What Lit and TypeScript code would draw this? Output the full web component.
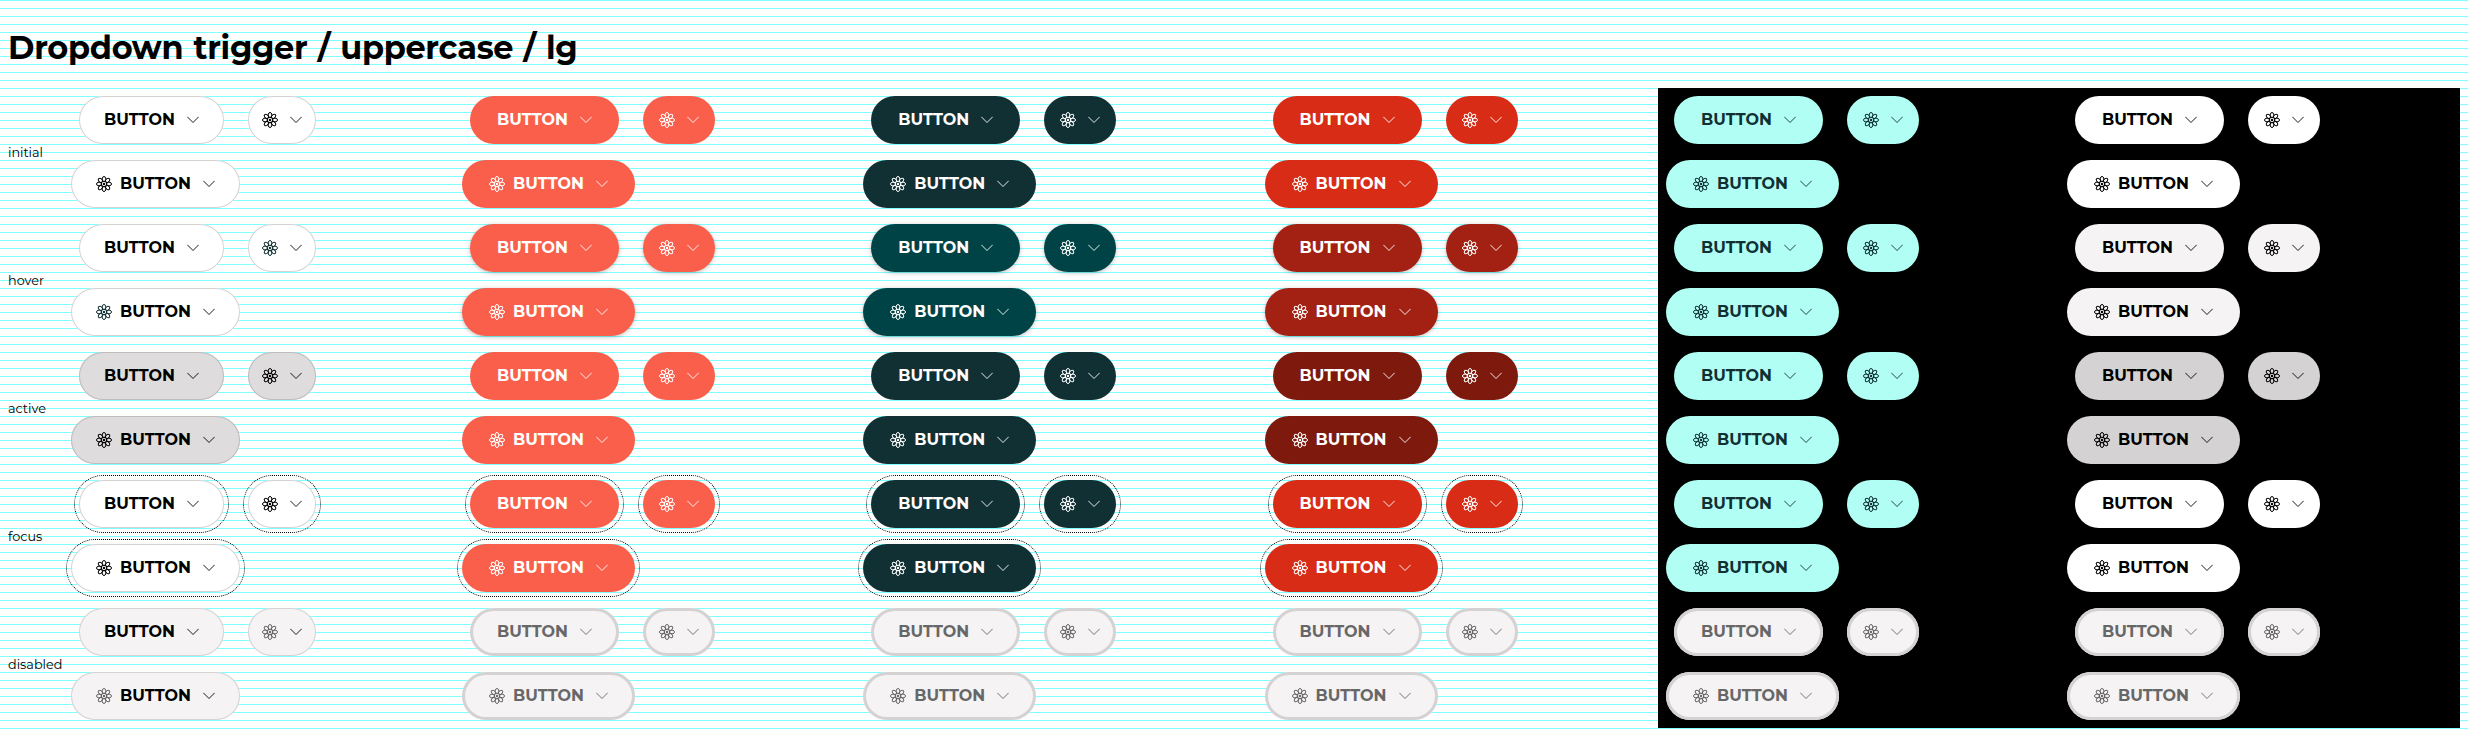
import { LitElement, html, css, svg } from "lit";
import { customElement, property } from "lit/decorators.js";

const STATES = ["initial", "hover", "active", "focus", "disabled"];
const KINDS = ["plain", "coral", "forest", "danger", "aqua", "white"];

@customElement("trigger-button")
class TriggerButton extends LitElement {
  @property() kind = "plain";
  @property() state = "initial";
  @property({ type: Boolean }) icon = false;
  @property({ type: Boolean }) label = false;

  static styles = css`
    :host { display: block; flex: none; }
    .btn {
      --bg: #fff; --fg: #000; --ic: var(--fg); --bd: transparent;
      display: flex; align-items: center; box-sizing: border-box; height: 48px;
      padding: 0 27px; border-radius: 24px; color: var(--fg); background: var(--bg);
      font: 700 16px/24px Montserrat, Gotham, "Open Sans", sans-serif;
    }
    .only { padding: 0 16px; }
    .icon { width: 16px; height: 16px; color: var(--ic); display: block; }
    .text { width: 71px; white-space: nowrap; }
    .icon + .text { margin-left: 8px; }
    .arrow { width: 12px; height: 8px; margin-left: 12px; display: block; }
    .hover:not(.plain) { box-shadow: 0 1px 4px rgba(0, 0, 0, .25); }
    .plain { padding: 0 25px; --bd: #d5d2d3; box-shadow: inset 0 0 0 1px var(--bd); }
    .plain.only { padding: 0 14px; }
    .plain.hover { --ic: #103033; }
    .plain.active { --bg: #dedcdd; --bd: #bfbcbd; }
    .plain.disabled { --bg: #f5f3f4; --ic: #676767; }
    .coral { --bg: #fa5f4b; --fg: #fff; }
    .forest { --bg: #103033; --fg: #fff; }
    .forest.hover { --bg: #004346; }
    .danger { --bg: #d82c16; --fg: #fff; }
    .danger.hover { --bg: #a32112; }
    .danger.active { --bg: #7e190d; }
    .aqua { --bg: #b1fff4; --fg: #103033; }
    .white.hover { --bg: #f5f3f4; }
    .white.active { --bg: #d5d2d3; }
    .disabled:not(.plain) { --bg: #f5f3f4; --fg: #676767; box-shadow: inset 0 0 0 3px #d5d2d3; }
    .focus:not(.aqua):not(.white) { outline: 1px dotted #000; outline-offset: 4px; }
  `;

  render() {
    const petals = [0, 45, 90, 135, 180, 225, 270, 315];
    return html`<div class="btn ${this.kind} ${this.state} ${this.label ? "" : "only"}">
      ${this.icon ? html`<svg class="icon" viewBox="0 0 16 16" fill="none" stroke="currentColor" stroke-width="1">
        ${petals.map((a) => svg`<path transform="rotate(${a} 8 8)" d="M7 5.500C5.500 3 6.300.5 8 .5s2.500 2.500 1 5" />`)}
        <circle cx="8" cy="8" r="2.700" stroke-width="1.100" /><circle cx="8" cy="8" r="1.200" fill="currentColor" stroke="none" />
      </svg>` : ""}
      ${this.label ? html`<span class="text">BUTTON</span>` : ""}
      <svg class="arrow" viewBox="0 0 12 8" fill="none" stroke="currentColor" stroke-width=".9"><path d="M.3 .8L6 6.500 11.700 .8" /></svg>
    </div>`;
  }
}

@customElement("app-root")
class AppRoot extends LitElement {
  static styles = css`
    :host {
      display: block; box-sizing: border-box; height: 736px; overflow: hidden;
      background: repeating-linear-gradient(#7fffff 0 1px, #fff 1px 8px);
      color: #000; font-family: Montserrat, Gotham, "Open Sans", sans-serif;
    }
    .title {
      margin: 0; height: 88px; padding: 24px 8px 0; box-sizing: border-box;
      font: 700 32px/48px Montserrat, Gotham, "Open Sans", sans-serif;
      letter-spacing: -.3px; word-spacing: 1.5px;
    }
    .grid { display: grid; grid-template-columns: 63px 391px 401.250px 401.250px 401.500px 401px 401px; grid-auto-rows: 128px; width: 2460px; }
    .name { align-self: center; padding: 1px 0 0 8px; font-size: 12.800px; line-height: 16px; }
    .cell { padding: 8px; display: flex; flex-direction: column; gap: 16px; align-items: flex-start; }
    .dark { background: #000; }
    .row { display: flex; gap: 24px; padding-left: 8px; }
  `;

  render() {
    return html`<h1 class="title">Dropdown trigger / uppercase / lg</h1>
      <div class="grid">${STATES.map((s) => html`<div class="name">${s}</div>
        ${KINDS.map((k, i) => html`<div class="cell ${i > 3 ? "dark" : ""}">
          <div class="row">
            <trigger-button kind=${k} state=${s} label></trigger-button>
            <trigger-button kind=${k} state=${s} icon></trigger-button>
          </div>
          <trigger-button kind=${k} state=${s} icon label></trigger-button>
        </div>`)}`)}
      </div>`;
  }
}
